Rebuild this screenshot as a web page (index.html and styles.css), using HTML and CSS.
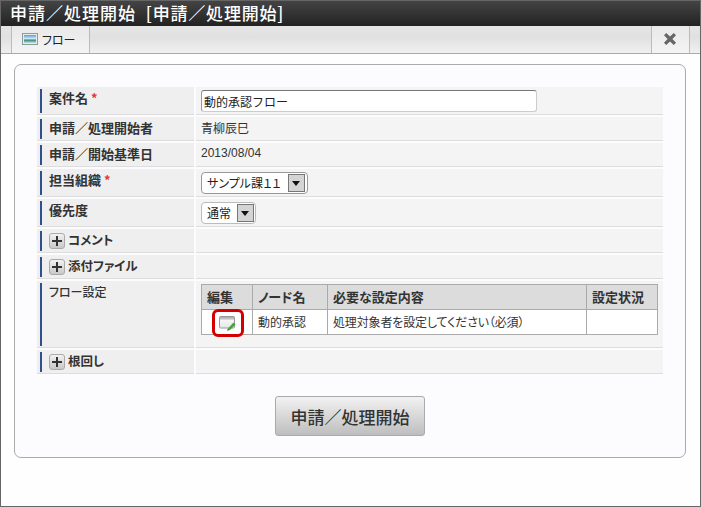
FILE: index.html
```html
<!DOCTYPE html>
<html lang="ja">
<head>
<meta charset="utf-8">
<title>申請／処理開始</title>
<link rel="stylesheet" href="styles.css">
</head>
<body>
<div class="frame">
  <header class="titlebar">申請／処理開始 <span class="title-sub">[申請／処理開始]</span></header>
  <nav class="tabbar">
    <div class="tab">
      <svg class="tab-icon" width="16" height="12" viewBox="0 0 16 12">
        <defs>
          <linearGradient id="sky" x1="0" y1="0" x2="0" y2="1">
            <stop offset="0" stop-color="#5a9ad8"/><stop offset=".45" stop-color="#cfe8f4"/><stop offset=".65" stop-color="#3f8f70"/><stop offset="1" stop-color="#bfe2ee"/>
          </linearGradient>
        </defs>
        <rect x=".5" y=".5" width="15" height="11" fill="#e8ecec" stroke="#8f9a9a"/>
        <rect x="2" y="2" width="12" height="8" fill="url(#sky)"/>
      </svg>
      <span>フロー</span>
    </div>
    <div class="tab tab-close">
      <svg width="14" height="14" viewBox="0 0 14 14"><path d="M3.2 1 7 4.6 10.8 1 13 3.2 9.4 7 13 10.8 10.8 13 7 9.4 3.2 13 1 10.8 4.6 7 1 3.2Z" fill="#666"/></svg>
    </div>
  </nav>
  <main class="panel">
    <div class="form">
      <div class="row">
        <div class="label"><div class="label-in">案件名<span class="req">*</span></div></div>
        <div class="value"><input class="text-input" type="text" value="動的承認フロー"></div>
      </div>
      <div class="row">
        <div class="label"><div class="label-in">申請／処理開始者</div></div>
        <div class="value value-text">青柳辰巳</div>
      </div>
      <div class="row">
        <div class="label"><div class="label-in">申請／開始基準日</div></div>
        <div class="value value-text value-date">2013/08/04</div>
      </div>
      <div class="row">
        <div class="label"><div class="label-in">担当組織<span class="req">*</span></div></div>
        <div class="value"><div class="select select-org"><span class="select-text">サンプル課１１</span><span class="select-btn"></span></div></div>
      </div>
      <div class="row">
        <div class="label"><div class="label-in">優先度</div></div>
        <div class="value"><div class="select"><span class="select-text">通常</span><span class="select-btn"></span></div></div>
      </div>
      <div class="row">
        <div class="label"><div class="label-in label-kana"><span class="plus"></span>コメント</div></div>
        <div class="value"></div>
      </div>
      <div class="row">
        <div class="label"><div class="label-in label-kana"><span class="plus"></span>添付ファイル</div></div>
        <div class="value"></div>
      </div>
      <div class="row">
        <div class="label"><div class="label-in label-plain">フロー設定</div></div>
        <div class="value value-flow">
          <table class="flow">
            <thead>
              <tr><th class="c1">編集</th><th class="c2">ノード名</th><th class="c3">必要な設定内容</th><th>設定状況</th></tr>
            </thead>
            <tbody>
              <tr>
                <td class="edit">
                  <span class="highlight"></span>
                  <svg class="edit-icon" width="17" height="15" viewBox="0 0 17 15">
                    <defs>
                      <linearGradient id="win" x1="0" y1="0" x2="0" y2="1"><stop offset="0" stop-color="#a0a0a0"/><stop offset=".25" stop-color="#d0d0d0"/><stop offset=".3" stop-color="#f6f6f6"/><stop offset="1" stop-color="#e6e6e6"/></linearGradient>
                    </defs>
                    <rect x=".5" y=".5" width="15" height="11.5" rx="1" fill="url(#win)" stroke="#9a9a9a"/>
                    <path d="M9 12.5 14.5 6.5 16.5 8.5 11 14Z" fill="#3fa92f"/>
                    <path d="M9 12.5 8 14.7 11 14Z" fill="#555"/>
                  </svg>
                </td>
                <td>動的承認</td>
                <td class="prop">処理対象者を設定してください（必須）</td>
                <td></td>
              </tr>
            </tbody>
          </table>
        </div>
      </div>
      <div class="row">
        <div class="label"><div class="label-in label-kana"><span class="plus"></span>根回し</div></div>
        <div class="value"></div>
      </div>
    </div>
    <div class="actions"><button class="submit" type="button">申請／処理開始</button></div>
  </main>
</div>
</body>
</html>
```
FILE: styles.css
```css
* { box-sizing: border-box; }
html, body { margin: 0; padding: 0; }
body {
  font-family: "Noto Sans CJK JP", "Liberation Sans", sans-serif;
  font-size: 12px;
  color: #333;
  background: #fff;
}
.frame {
  width: 701px;
  height: 507px;
  border: 1px solid #666;
  border-top: 0;
  overflow: hidden;
  background: #fefefe;
}
.titlebar {
  height: 26px;
  padding-left: 9px;
  border-top: 1px solid #666;
  background: linear-gradient(#444, #222);
  color: #fff;
  font-size: 17px;
  font-weight: 500;
  line-height: 23px;
  letter-spacing: 1px;
  white-space: nowrap;
}
.title-sub { margin-left: 5px; letter-spacing: .8px; }
.tabbar {
  height: 28px;
  display: flex;
  justify-content: space-between;
  padding: 0 10px;
  border-bottom: 1px solid #aaa;
  background: linear-gradient(#e6e6e6, #e0e0e0 40%, #f0f0f0);
}
.tab {
  display: flex;
  align-items: center;
  gap: 4px;
  width: 79px;
  padding: 0 0 1px 10px;
  border-left: 1px solid #bbb;
  border-right: 1px solid #bbb;
  background: linear-gradient(#e8e8e8, #f4f4f4);
  font-size: 12px;
  font-feature-settings: "palt";
  color: #222;
}
.tab-icon { flex: none; }
.tab-close { width: 39px; padding: 0 0 1px 11px; }
.panel {
  width: 672px;
  height: 394px;
  margin: 10px 0 0 13px;
  padding: 22px 22px 0;
  border: 1px solid #aaa;
  border-radius: 7px;
  background: #fcfcff;
}
.row {
  display: flex;
  gap: 2px;
  margin-bottom: 2px;
}
.row:last-child { margin-bottom: 0; }
.label, .value {
  border-bottom: 1px solid #ddd;
  min-height: 24px;
}
.label {
  flex: none;
  width: 157px;
  padding: 2px 0 1px 3px;
  background: #efefef;
  display: flex;
}
.label-in {
  flex: 1;
  display: flex;
  align-items: flex-start;
  border-left: 2px solid #2f4f8f;
  padding-left: 7px;
  font-size: 13px;
  font-weight: 700;
  line-height: 18px;
  color: #333;
}
.label-kana { font-feature-settings: "palt"; font-size: 12.5px; }
.label-plain { font-size: 12px; font-weight: 500; font-feature-settings: "palt"; }
.req { color: #e33; margin-left: 3px; font-weight: 700; }
.value {
  flex: 1;
  padding: 3px 0 2px 5px;
  background: #f4f4f4;
}
.value-text {
  padding-top: 1px;
  line-height: 19px;
  color: #333;
}
.value-date { font-family: "Liberation Sans", sans-serif; }
.text-input {
  display: block;
  width: 336px;
  height: 22px;
  padding: 0 2px;
  border: 1px solid #ccc;
  border-top-color: #777;
  border-left-color: #999;
  border-radius: 3px;
  background: #fff;
  font: 12px "Noto Sans CJK JP", sans-serif;
  color: #222;
}
.select {
  display: inline-flex;
  vertical-align: top;
  align-items: center;
  height: 22px;
  padding: 0 1px 0 5px;
  border: 1px solid #bbb;
  border-radius: 4px;
  background: #fff;
  color: #222;
}
.select-org { border-color: #999; padding-right: 2px; }
.select-org .select-btn { margin-left: 7px; }
.select-text { font-size: 12px; line-height: 20px; font-feature-settings: "palt"; }
.select-btn {
  width: 17px;
  height: 18px;
  margin-left: 6px;
  border: 1px solid #777;
  background: #d4d4d4;
  position: relative;
}
.select-btn::after {
  content: "";
  position: absolute;
  left: 3px;
  top: 6px;
  border: 4.5px solid transparent;
  border-top: 5px solid #111;
  border-bottom: 0;
}
.plus {
  flex: none;
  width: 16px;
  height: 16px;
  margin: 2px 3px 0 0;
  border: 1px solid #aaa;
  border-radius: 3px;
  background:
    linear-gradient(#333, #333) center / 10px 2px no-repeat,
    linear-gradient(#333, #333) center / 2px 10px no-repeat,
    linear-gradient(#f2f2f2, #c8c8c8);
}
.value-flow { padding-bottom: 12px; }
.flow {
  width: 457px;
  border-collapse: collapse;
  table-layout: fixed;
  background: #fff;
}
.flow th, .flow td {
  height: 25px;
  padding: 0 0 0 5px;
  border: 1px solid #aaa;
  text-align: left;
  color: #333;
  line-height: 16px;
  white-space: nowrap;
}
.flow th { background: #dcdcdc; font-size: 13px; font-weight: 700; font-feature-settings: "palt"; }
.c1 { width: 51px; }
.c2 { width: 75px; }
.c3 { width: 259px; }
.flow .edit { position: relative; padding: 0; text-align: center; }
.edit-icon { display: block; margin: 0 auto; position: relative; top: 1px; left: 0; }
.highlight {
  position: absolute;
  left: 10px;
  top: -1px;
  width: 32px;
  height: 28px;
  border: 3px solid #d40000;
  border-radius: 6px;
}
.prop { font-feature-settings: "palt"; letter-spacing: -.15px; }
.actions { display: flex; justify-content: center; margin-top: 22px; }
.submit {
  width: 150px;
  height: 40px;
  padding: 0;
  border: 1px solid #aaa;
  border-radius: 3px;
  background: linear-gradient(#f2f2f2, #bebebe);
  font: 500 17px "Noto Sans CJK JP", sans-serif;
  color: #333;
}
```
